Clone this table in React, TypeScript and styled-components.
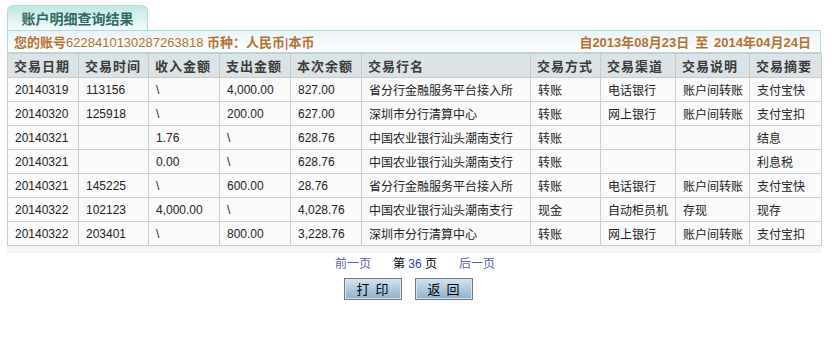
import React from "react";
import styled, { createGlobalStyle } from "styled-components";

const Global = createGlobalStyle`
  body { margin: 0; background: #fff; font-family: "Liberation Sans", "Noto Sans CJK SC", Arial, sans-serif; }
`;

const Page = styled.div`
  padding: 5px 0 0 7px;
  width: 814px;
`;

const Tab = styled.div`
  width: 139px;
  height: 24px;
  border: 1px solid #b3dcda;
  border-bottom: none;
  border-radius: 6px 6px 0 0;
  background: linear-gradient(#c2e6e3, #f4fbfa);
  display: flex;
  align-items: center;
  justify-content: center;
  font: bold 14px "Noto Sans CJK SC", sans-serif;
  color: #2e6b66;
`;

const InfoBar = styled.div`
  height: 21px;
  border: 1px solid #a9dcda;
  background: linear-gradient(#eaf3f9, #ffffff);
  display: flex;
  align-items: center;
  justify-content: space-between;
  padding: 0 9px 0 6px;
  font-size: 13px;
  color: #b5712f;
`;

const B = styled.b`
  font-family: "Noto Sans CJK SC", sans-serif;
  font-weight: bold;
`;

const Num = styled.span<{ $bold?: boolean }>`
  font-family: "Liberation Sans", Arial, sans-serif;
  font-weight: ${(p) => (p.$bold ? "bold" : "normal")};
`;

const Sep = styled.span`
  color: #d04030;
  font-weight: normal;
`;

const Table = styled.table`
  width: 814px;
  border-collapse: collapse;
  table-layout: fixed;
  background: #fafafa;
`;

const Th = styled.th`
  height: 23px;
  padding: 0 0 0 6px;
  background: #dce3e6;
  border: 1px solid #cacaca;
  text-align: left;
  font: bold 13px "Noto Sans CJK SC", sans-serif;
  color: #3a3a3a;
  letter-spacing: 1px;
  white-space: nowrap;
`;

const Td = styled.td`
  height: 23px;
  padding: 0 0 0 7px;
  border: 1px solid #cccccc;
  font-size: 12px;
  color: #222;
  font-family: "Liberation Sans", "Noto Sans CJK SC", Arial, sans-serif;
  white-space: nowrap;
  overflow: hidden;
`;

const Strip = styled.div`
  height: 7px;
  background: #f4f4f4;
`;

const Pager = styled.div`
  display: flex;
  justify-content: center;
  gap: 22px;
  margin-top: 1px;
  font: 12px "Liberation Sans", "Noto Sans CJK SC", sans-serif;
  color: #000;
  padding-left: 2px;
`;

const PageLink = styled.a`
  color: #5b5fa3;
  text-decoration: none;
`;

const PageNum = styled.span`
  color: #3040a0;
`;

const Buttons = styled.div`
  display: flex;
  justify-content: center;
  gap: 13px;
  margin-top: 7px;
  padding-right: 12px;
`;

const Btn = styled.button`
  width: 58px;
  height: 22px;
  border: 1px solid #6a7a86;
  box-shadow: inset 0 0 0 1px #d8e6f0;
  background: linear-gradient(#d2e2ef, #8eb0cc);
  font: 13px "Noto Sans CJK SC", sans-serif;
  color: #000;
  letter-spacing: 6px;
  padding: 0 0 0 6px;
  line-height: 18px;
`;

const cols = [71, 70, 71, 71, 71, 169, 70, 75, 74, 72];
const heads = ["交易日期", "交易时间", "收入金额", "支出金额", "本次余额", "交易行名", "交易方式", "交易渠道", "交易说明", "交易摘要"];
const rows = [
  ["20140319", "113156", "\\", "4,000.00", "827.00", "省分行金融服务平台接入所", "转账", "电话银行", "账户间转账", "支付宝快"],
  ["20140320", "125918", "\\", "200.00", "627.00", "深圳市分行清算中心", "转账", "网上银行", "账户间转账", "支付宝扣"],
  ["20140321", "", "1.76", "\\", "628.76", "中国农业银行汕头潮南支行", "转账", "", "", "结息"],
  ["20140321", "", "0.00", "\\", "628.76", "中国农业银行汕头潮南支行", "转账", "", "", "利息税"],
  ["20140321", "145225", "\\", "600.00", "28.76", "省分行金融服务平台接入所", "转账", "电话银行", "账户间转账", "支付宝快"],
  ["20140322", "102123", "4,000.00", "\\", "4,028.76", "中国农业银行汕头潮南支行", "现金", "自动柜员机", "存现", "现存"],
  ["20140322", "203401", "\\", "800.00", "3,228.76", "深圳市分行清算中心", "转账", "网上银行", "账户间转账", "支付宝扣"],
];

export default function App() {
  return (
    <Page>
      <Global />
      <Tab>账户明细查询结果</Tab>
      <InfoBar>
        <span>
          <B>您的账号</B>
          <Num>6228410130287263818</Num> <B>币种：人民币</B>
          <Sep>|</Sep>
          <B>本币</B>
        </span>
        <span>
          <B>自</B>
          <Num $bold>2013</Num>
          <B>年</B>
          <Num $bold>08</Num>
          <B>月</B>
          <Num $bold>23</Num>
          <B>日 &nbsp;至 &nbsp;</B>
          <Num $bold>2014</Num>
          <B>年</B>
          <Num $bold>04</Num>
          <B>月</B>
          <Num $bold>24</Num>
          <B>日</B>
        </span>
      </InfoBar>
      <Table>
        <colgroup>
          {cols.map((w, i) => (
            <col key={i} style={{ width: w }} />
          ))}
        </colgroup>
        <thead>
          <tr>
            {heads.map((h) => (
              <Th key={h}>{h}</Th>
            ))}
          </tr>
        </thead>
        <tbody>
          {rows.map((r, i) => (
            <tr key={i}>
              {r.map((c, j) => (
                <Td key={j}>{c}</Td>
              ))}
            </tr>
          ))}
        </tbody>
      </Table>
      <Strip />
      <Pager>
        <PageLink>前一页</PageLink>
        <span>
          第 <PageNum>36</PageNum> 页
        </span>
        <PageLink>后一页</PageLink>
      </Pager>
      <Buttons>
        <Btn>打印</Btn>
        <Btn>返回</Btn>
      </Buttons>
    </Page>
  );
}
